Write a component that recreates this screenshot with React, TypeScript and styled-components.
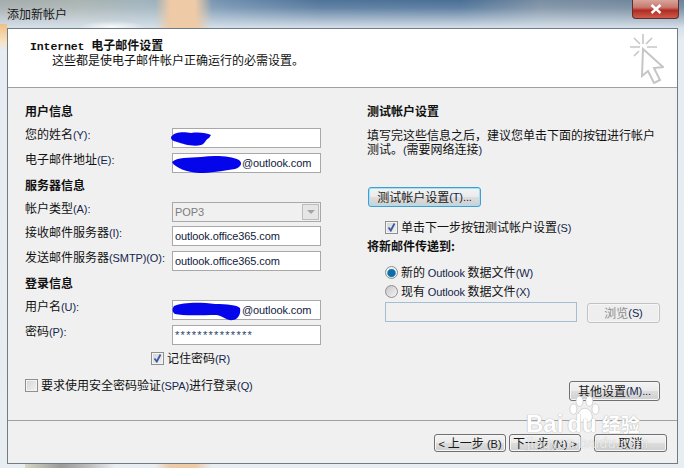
import React from "react";
import styled, { createGlobalStyle } from "styled-components";

const Global = createGlobalStyle`
  html, body { margin: 0; padding: 0; background: #e8eef4; }
  * { box-sizing: border-box; }
  body { font-family: "Noto Sans CJK SC", "Liberation Sans", sans-serif; font-size: 12px; color: #111; }
`;

const Page = styled.div`
  position: relative;
  width: 684px;
  height: 468px;
  overflow: hidden;
  display: flex;
  flex-direction: column;
  background:
    radial-gradient(ellipse 34px 6px at 112px 27px, #f8f9f9 0%, rgba(248,249,249,0) 100%),
    linear-gradient(90deg, rgba(240,200,160,0) 155px, #eecaa6 170px, #eecaa6 195px, rgba(240,200,160,0) 212px),
    linear-gradient(180deg, rgba(225,233,240,0) 0, rgba(225,233,240,0.15) 8px, #d6e0e9 28px, #e6ecf1 40px, #e8edf1 100%),
    linear-gradient(90deg, #a4abab 0px, #aab4b2 80px, #9fb3bd 150px, #6f8fae 230px, #4f7399 320px, #4a6f96 460px, #7a8ea2 540px, #6d8299 684px);
`;

const LeftGlow = styled.div`
  position: absolute;
  left: 0;
  top: 24px;
  width: 7px;
  height: 26px;
  background: linear-gradient(180deg, #f0c080, #f7e4c6 70%, rgba(247,228,198,0));
`;

const BottomGlow = styled.div`
  position: absolute;
  left: 25px;
  bottom: 0;
  width: 90px;
  height: 4px;
  background: linear-gradient(90deg, #d4d6c4 0, #9b9b9b 40%, #bcbcbc 70%, rgba(188,188,188,0));
`;

const TitleBar = styled.div`
  position: relative;
  height: 28px;
  flex: none;
  display: flex;
  align-items: flex-start;
  justify-content: space-between;
  padding: 4px 6px 0 7px;
`;

const TitleText = styled.span`
  font-size: 12px;
  line-height: 20px;
  color: #161616;
`;

const CloseButton = styled.div`
  width: 47px;
  height: 19px;
  margin-top: -4px;
  margin-right: -1px;
  border: 1px solid #5c3030;
  border-top: none;
  border-radius: 0 0 4px 4px;
  background: linear-gradient(180deg, #d8a49a 0%, #c87a70 40%, #b02c20 58%, #cd5c4e 100%);
  display: flex;
  align-items: center;
  justify-content: center;
`;

const Frame = styled.div`
  position: relative;
  margin: 0 6px 0 7px;
  width: 671px;
  height: 436px;
  flex: none;
  display: flex;
  flex-direction: column;
  border: 1px solid #6e7c86;
  background: #f0f0f0;
`;

const Header = styled.header`
  height: 59px;
  flex: none;
  background: #fff;
  border-bottom: 1px solid #a0a0a0;
  display: flex;
  justify-content: space-between;
  padding: 8px 13px 0 22px;
`;

const HeaderTitle = styled.div`
  font-weight: 700;
  line-height: 16px;
`;

const MonoWord = styled.span`
  font-family: "Liberation Mono", monospace;
  font-size: 11.5px;
  letter-spacing: -0.1px;
  line-height: 1;
`;

const HeaderSub = styled.div`
  margin: -1px 0 0 22px;
  line-height: 16px;
`;

const Body = styled.main`
  height: 332px;
  flex: none;
  display: grid;
  padding: 14px 0 0 17px;
  justify-content: start;
  grid-template-columns: 296px 293px;
  column-gap: 46px;
`;

const Column = styled.section`
  display: flex;
  flex-direction: column;
`;

const Heading = styled.h2<{ $top?: number; $bottom?: number }>`
  margin: ${(p) => p.$top ?? 0}px 0 ${(p) => p.$bottom ?? 8}px;
  height: 18px;
  font-size: 12px;
  line-height: 18px;
  font-weight: 700;
`;

const Row = styled.div<{ $gap?: number }>`
  display: flex;
  justify-content: space-between;
  height: 20px;
  margin-bottom: ${(p) => p.$gap ?? 5}px;
`;

const Label = styled.label`
  line-height: 12px;
  white-space: nowrap;
`;

const Key = styled.span`
  font-family: "Liberation Sans", sans-serif;
  color: #13264e;
  font-size: 11px;
  letter-spacing: -0.1px;
  line-height: 1;
`;

const Field = styled.div<{ $indent?: number; $disabled?: boolean; $mask?: boolean }>`
  position: relative;
  width: 149px;
  height: 20px;
  border: 1px solid #a8a8a8;
  background: ${(p) => (p.$disabled ? "#f0f0f0" : "#fff")};
  color: ${(p) => (p.$disabled ? "#7d7d7d" : p.$mask ? "#2a3f6a" : "#10203c")};
  font-family: "Liberation Sans", sans-serif;
  font-size: 11px;
  letter-spacing: ${(p) => (p.$mask ? "1.3px" : "-0.1px")};
  line-height: 18px;
  padding-left: ${(p) => p.$indent ?? 2}px;
  display: flex;
  align-items: center;
  justify-content: space-between;
  white-space: nowrap;
`;

const Scribble = styled.svg`
  position: absolute;
  left: -2px;
  top: 0;
  overflow: visible;
`;

const DropButton = styled.div`
  width: 17px;
  height: 16px;
  margin-right: 1px;
  border: 1px solid #bcbcbc;
  background: #e6e6e6;
  display: flex;
  align-items: center;
  justify-content: center;
  &::after {
    content: "";
    border-left: 4px solid transparent;
    border-right: 4px solid transparent;
    border-top: 4px solid #a4a4a4;
  }
`;

const CheckLine = styled.div<{ $left?: number; $top?: number }>`
  display: flex;
  align-items: center;
  gap: 3px;
  height: 16px;
  line-height: 16px;
  margin-left: ${(p) => p.$left ?? 0}px;
  margin-top: ${(p) => p.$top ?? 0}px;
  white-space: nowrap;
`;

const CheckBox = styled.span`
  width: 13px;
  height: 13px;
  flex: none;
  border: 1px solid #8f8f8f;
  box-shadow: inset 0 0 0 1px #f4f4f4;
  background: linear-gradient(135deg, #d4d4d4, #f2f2f2);
  display: flex;
  align-items: center;
  justify-content: center;
`;

const RadioDot = styled.span<{ $on?: boolean }>`
  width: 13px;
  height: 13px;
  flex: none;
  border-radius: 50%;
  border: 1px solid #8e8e8e;
  background: ${(p) =>
    p.$on
      ? "radial-gradient(circle at 50% 55%, #0f6ea8 0 3.4px, #6fb2d8 4.2px, #eef2f5 4.6px)"
      : "linear-gradient(135deg, #c6c6c6, #f4f4f4)"};
`;

const Paragraph = styled.p`
  margin: 0;
  width: 293px;
  font-size: 12px;
  line-height: 14px;
`;

const Button = styled.div<{ $w: number; $h?: number; $disabled?: boolean; $focus?: boolean }>`
  width: ${(p) => p.$w}px;
  height: ${(p) => p.$h ?? 20}px;
  flex: none;
  border: 1px solid ${(p) => (p.$focus ? "#3c9fd6" : p.$disabled ? "#c2c2c2" : "#707070")};
  border-radius: 3px;
  background: ${(p) =>
    p.$disabled
      ? "#eeeeee"
      : "linear-gradient(180deg, #f3f3f3 0%, #ebebeb 48%, #dddddd 52%, #cfcfcf 100%)"};
  box-shadow: ${(p) => (p.$focus ? "inset 0 0 0 1px #a6e0f5" : "inset 0 0 0 1px #f6f6f6")};
  color: ${(p) => (p.$disabled ? "#8c8c8c" : "#1a1a1a")};
  font-size: 12px;
  line-height: 1;
  display: flex;
  align-items: center;
  justify-content: center;
  white-space: nowrap;
`;

const NavKey = styled.span`
  font-family: "Liberation Sans", sans-serif;
  font-size: 11px;
  line-height: 1;
`;

const RightEnd = styled.div`
  display: flex;
  justify-content: flex-end;
  margin-top: 58px;
`;

const BrowseRow = styled.div`
  display: flex;
  justify-content: space-between;
  margin: 3px 0 0 18px;
`;

const WideField = styled.div`
  width: 192px;
  height: 20px;
  border: 1px solid #a5bcd2;
  background: #f0f0f0;
`;

const Footer = styled.footer`
  flex: 1;
  border-top: 1px solid #a0a0a0;
  display: flex;
  justify-content: flex-end;
  align-items: flex-start;
  padding: 13px 10px 0 0;
  gap: 3px;
`;

const Watermark = styled.div`
  position: absolute;
  left: 516px;
  top: 392px;
  width: 150px;
  height: 66px;
  pointer-events: none;
`;

const WmBrand = styled.div`
  position: absolute;
  left: 10px;
  top: 18px;
  display: flex;
  align-items: center;
  font-family: "Liberation Sans", sans-serif;
  font-size: 24px;
  line-height: 28px;
  font-weight: 700;
  color: #fff;
  text-shadow: 0 0 1px #b4b4b4, 0 0 1px #b4b4b4;
  white-space: nowrap;
`;

const WmCjk = styled.span`
  font-family: "Noto Sans CJK SC", sans-serif;
  font-size: 19px;
  margin-left: 5px;
`;

const WmUrl = styled.div`
  position: absolute;
  left: 11px;
  top: 44px;
  font-family: "Liberation Sans", sans-serif;
  font-size: 14px;
  letter-spacing: 0.5px;
  line-height: 14px;
  color: rgba(255, 255, 255, 0.75);
  text-shadow: 0 0 1px rgba(120, 120, 120, 0.5);
  white-space: nowrap;
`;

const Check = () => (
  <svg width="11" height="11" viewBox="0 0 11 11">
    <path d="M2.5 5.5 L4.8 8.5 L8.5 1.5" fill="none" stroke="#3a5aa8" strokeWidth="1.8" />
  </svg>
);

const Blob = ({ d, w = 90, h = 20 }: { d: string; w?: number; h?: number }) => (
  <Scribble width={w} height={h} viewBox={`0 0 ${w} ${h}`}>
    <path d={d} fill="#0505ec" />
  </Scribble>
);

export default function App() {
  return (
    <Page>
      <Global />
      <LeftGlow />
      <BottomGlow />
      <TitleBar>
        <TitleText>添加新帐户</TitleText>
        <CloseButton>
          <svg width="12" height="10" viewBox="0 0 12 10">
            <path d="M1.5 1 L10.5 9 M10.5 1 L1.5 9" stroke="#fff" strokeWidth="2.4" />
          </svg>
        </CloseButton>
      </TitleBar>
      <Frame>
        <Header>
          <div>
            <HeaderTitle>
              <MonoWord>Internet </MonoWord>电子邮件设置
            </HeaderTitle>
            <HeaderSub>这些都是使电子邮件帐户正确运行的必需设置。</HeaderSub>
          </div>
          <svg width="34" height="50" viewBox="0 0 34 50" style={{ marginTop: -3 }}>
            <g fill="none" stroke="#c6c6c6" strokeWidth="1.6">
              <path d="M13 0 V10 M0 13 H10 M17 13 H27 M4 4 L10 10 M22 4 L16 10 M4 22 L9 17" />
              <path d="M13 15 L33 33 L24 34 L30 46 L24 49 L18 37 L12 42 Z" strokeWidth="2" />
            </g>
          </svg>
        </Header>
        <Body>
          <Column>
            <Heading>用户信息</Heading>
            <Row>
              <Label>您的姓名<Key>(Y):</Key></Label>
              <Field>
                <Blob w={50} d="M0 8 C4 2 14 3 20 4 C28 3 36 4 40 6 L38 9 C34 11 34 15 30 16 C22 18 12 15 6 13 C2 12 0 11 0 8Z" />
              </Field>
            </Row>
            <Row>
              <Label>电子邮件地址<Key>(E):</Key></Label>
              <Field $indent={69}>
                <Blob d="M1 8 C6 3 18 4 30 3 C44 1 60 2 68 6 C72 9 70 13 64 15 C50 17 40 19 28 19 C16 18 4 14 1 8Z" />
                @outlook.com
              </Field>
            </Row>
            <Heading $top={-2}>服务器信息</Heading>
            <Row $gap={4}>
              <Label>帐户类型<Key>(A):</Key></Label>
              <Field $disabled>
                POP3
                <DropButton />
              </Field>
            </Row>
            <Row>
              <Label>接收邮件服务器<Key>(I):</Key></Label>
              <Field>outlook.office365.com</Field>
            </Row>
            <Row>
              <Label>发送邮件服务器<Key>(SMTP)(O):</Key></Label>
              <Field>outlook.office365.com</Field>
            </Row>
            <Heading $top={-2}>登录信息</Heading>
            <Row>
              <Label>用户名<Key>(U):</Key></Label>
              <Field $indent={69}>
                <Blob d="M3 5 C12 1 30 1 44 3 C56 3 66 4 69 7 C70 12 68 18 62 19 C56 20 54 16 46 14 C30 14 12 15 4 13 C1 11 1 8 3 5Z" />
                @outlook.com
              </Field>
            </Row>
            <Row $gap={4}>
              <Label>密码<Key>(P):</Key></Label>
              <Field $mask>**************</Field>
            </Row>
            <CheckLine $left={126} $top={1}>
              <CheckBox><Check /></CheckBox>
              <span>记住密码<Key>(R)</Key></span>
            </CheckLine>
            <CheckLine $top={11}>
              <CheckBox />
              <span>要求使用安全密码验证<Key>(SPA)</Key>进行登录<Key>(Q)</Key></span>
            </CheckLine>
          </Column>
          <Column>
            <Heading>测试帐户设置</Heading>
            <Paragraph>
              {"填写完这些信息之后\uFF0C建议您单击下面的按钮进行帐户测试。"}<Key>(</Key>需要网络连接<Key>)</Key>
            </Paragraph>
            <Button $w={113} $focus style={{ marginTop: 31, marginLeft: 1 }}>
              测试帐户设置<Key>(T)...</Key>
            </Button>
            <CheckLine $left={18} $top={12}>
              <CheckBox><Check /></CheckBox>
              <span>单击下一步按钮测试帐户设置<Key>(S)</Key></span>
            </CheckLine>
            <Heading $top={2} $bottom={9}>将新邮件传递到:</Heading>
            <CheckLine $left={18}>
              <RadioDot $on />
              <span>新的 <Key>Outlook</Key> 数据文件<Key>(W)</Key></span>
            </CheckLine>
            <CheckLine $left={18} $top={3}>
              <RadioDot />
              <span>现有 <Key>Outlook</Key> 数据文件<Key>(X)</Key></span>
            </CheckLine>
            <BrowseRow>
              <WideField />
              <Button $w={73} $disabled style={{ marginTop: 1 }}>浏览<Key>(S)</Key></Button>
            </BrowseRow>
            <RightEnd>
              <Button $w={91}>其他设置<Key>(M)...</Key></Button>
            </RightEnd>
          </Column>
        </Body>
        <Footer>
          <Button $w={72} $h={18}><span><NavKey>{"<\u00A0"}</NavKey>上一步<NavKey>{"\u00A0(B)"}</NavKey></span></Button>
          <Button $w={72} $h={18} style={{ marginRight: 10 }}><span>下一步<NavKey>{"\u00A0(N)\u00A0>"}</NavKey></span></Button>
          <Button $w={73} $h={18}>取消</Button>
        </Footer>
      </Frame>
      <Watermark>
        <svg width="36" height="30" viewBox="0 0 40 34" style={{ position: "absolute", left: 50, top: 3 }}>
          <g fill="#fff" stroke="#c4c4c4" strokeWidth="0.8">
            <ellipse cx="8" cy="16" rx="4" ry="6" />
            <ellipse cx="15" cy="7" rx="4" ry="6" />
            <ellipse cx="26" cy="7" rx="4" ry="6" />
            <ellipse cx="33" cy="16" rx="4" ry="6" />
            <path d="M21 15 C27 15 32 24 28 29 C25 32 17 32 14 29 C10 24 15 15 21 15Z" />
          </g>
        </svg>
        <WmBrand>
          Bai<span style={{ marginLeft: 4 }}>du</span><WmCjk>经验</WmCjk>
        </WmBrand>
        <WmUrl>jingyan.baidu.com</WmUrl>
      </Watermark>
    </Page>
  );
}
